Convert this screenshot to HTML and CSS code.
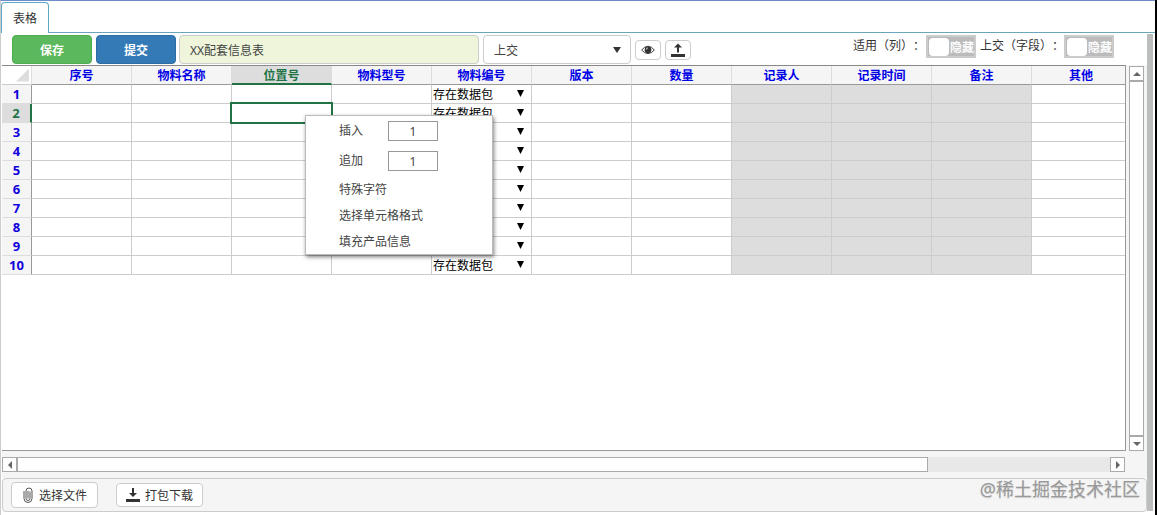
FILE: index.html
```
<!DOCTYPE html>
<html lang="zh-CN">
<head>
	<meta charset="utf-8">
	<title>表格</title>
	<link rel="stylesheet" href="styles.css">
</head>
<body>
	<div class="window">
		<div class="tabs">
			<div class="tab">表格</div>
			<div class="tabline"></div>
		</div>

		<div class="content">
			<div class="main">
				<div class="toolbar">
					<button class="btn save">保存</button>
					<button class="btn submit">提交</button>
					<input class="title" type="text" value="XX配套信息表">
					<div class="select"><span>上交</span><span class="arrow"></span></div>
					<button class="icon">
						<svg width="14" height="10" viewBox="0 0 14 10"><path d="M.6 5Q7-2.600 13.400 5Q7 12.200 .6 5Z" fill="#fff" stroke="#444" stroke-width="1"/><circle cx="7" cy="4.800" r="3.400" fill="#333"/><path d="M5.300 4.600Q5.400 3 7 2.900" fill="none" stroke="#ddd" stroke-width=".9"/></svg>
					</button>
					<button class="icon">
						<svg width="14" height="14" viewBox="0 0 14 14"><path d="M0 11h14v3H0zM6 9.500V4.500H3L7 .5l4 4H8v5z" fill="#333"/></svg>
					</button>
					<div class="switches">
						<span>适用（列）：</span>
						<div class="switch"><i></i><b>隐藏</b></div>
						<span>上交（字段）：</span>
						<div class="switch"><i></i><b>隐藏</b></div>
					</div>
				</div>

				<div class="sheetbox">
					<div class="sheet">
						<table>
							<thead>
								<tr>
									<th class="corner"><i></i></th>
									<th>序号</th>
									<th>物料名称</th>
									<th class="active">位置号</th>
									<th>物料型号</th>
									<th>物料编号</th>
									<th>版本</th>
									<th>数量</th>
									<th>记录人</th>
									<th>记录时间</th>
									<th>备注</th>
									<th class="last">其他</th>
								</tr>
							</thead>
							<tbody id="rows"></tbody>
						</table>

						<div class="menu">
							<div class="item num"><span>插入</span><input type="text" value="1"></div>
							<div class="item num"><span>追加</span><input type="text" value="1"></div>
							<div class="item">特殊字符</div>
							<div class="item">选择单元格格式</div>
							<div class="item">填充产品信息</div>
						</div>
					</div>
					<div class="vscroll">
						<div class="sbtn"><i class="up"></i></div>
						<div class="thumb"></div>
						<div class="sbtn"><i class="down"></i></div>
					</div>
				</div>

				<div class="hscroll">
					<div class="sbtn"><i class="left"></i></div>
					<div class="thumb"></div>
					<div class="track"></div>
					<div class="sbtn"><i class="right"></i></div>
				</div>

				<div class="footer">
					<button class="file">
						<svg width="10" height="16" viewBox="0 0 10 16"><path d="M1 4v7.500a4 4 0 0 0 8 0V4a3 3 0 0 0-6 0v7.500a2 2 0 0 0 4 0V4.500M5 4v7.500" fill="none" stroke="#555" stroke-width="1"/></svg>
						选择文件
					</button>
					<button class="file pack">
						<svg width="14" height="14" viewBox="0 0 14 14"><path d="M0 11h14v3H0zM6 0h2v5h3L7 9 3 5h3z" fill="#333"/></svg>
						打包下载
					</button>
					<span class="mark">@稀土掘金技术社区</span>
				</div>
			</div>
			<div class="pagescroll"></div>
		</div>
	</div>

	<script>
	var rows = document.getElementById("rows")
	for(var r = 1; r <= 10; r++){
		var tr = document.createElement('tr')
		var content = `<th class="${r == 2 ? 'active' : ''}">${r}</th>`
		for(var c = 1; c <= 11; c++){
			var cls = ""
			var text = ""
			if(c == 3 && r == 2) cls = "selected"
			if(c == 5){
				cls = "combo"
				text = `<div><span>存在数据包</span><i></i></div>`
			}
			if(c >= 8 && c <= 10) cls = "locked"
			content += `<td class="${cls}">${text}</td>`
		}
		tr.innerHTML = content
		rows.append(tr)
	}
	</script>
</body>
</html>
```
FILE: styles.css
```
*{box-sizing:border-box;}
body{margin:0; background:#000; font-family:"Noto Sans","Noto Sans CJK SC",sans-serif; font-size:12px; color:#333; overflow:hidden; text-spacing-trim:space-all;}
button,input{font:inherit; color:inherit; margin:0;}
svg{display:block; flex:none;}
i,b{font-style:normal;}

.window{width:1155px; height:515px; background:#fff; border-top:1px solid #6c8cc8; border-left:1px solid #ccc; display:flex; flex-direction:column;}

.tabs{display:flex; height:32px; padding-top:1px; flex:none;}
.tab{width:48px; height:31px; border:1px solid #5ba9c6; border-bottom:none; border-radius:4px 4px 0 0; text-align:center; line-height:32px;}
.tabline{flex:1; border-bottom:1px solid #6aa5bd;}

.content{display:flex; height:482px;}
.main{width:1146px; padding-left:1px; flex:none;}
.pagescroll{width:6px; height:477px; margin-top:1px; background:#bcbebd;}

.toolbar{display:flex; height:32px; padding:2px 0 0 10px;}
.btn{width:80px; height:29px; margin-right:4px; padding:1px 0 0; border-radius:4px; color:#fff; font-weight:bold; line-height:27px;}
.save{background:#5cb85c; border:1px solid #4cae4c;}
.submit{background:#337ab7; border:1px solid #2e6da4; margin-right:3px;}
.title{width:300px; height:29px; margin-right:4px; padding:1px 10px 0; background:#eef5da; border:1px solid #ccc; border-radius:4px; color:#444;}
.select{width:148px; height:29px; margin-right:4px; padding:0 9px 0 10px; border:1px solid #ccc; border-radius:4px; display:flex; align-items:center; justify-content:space-between; color:#444;}
.arrow{border:4px solid transparent; border-top:6px solid #333; border-bottom:none;}
.icon{width:26px; height:20px; margin:5px 4px 0 0; padding:0; background:#fff; border:1px solid #ccc; border-radius:4px; display:flex; align-items:center; justify-content:center;}
.switches{display:flex; margin-left:158px; white-space:nowrap; line-height:22px;}
.switches span{width:73px;}
.switches span + .switch + span{width:84px; margin-left:4px;}
.switch{width:50px; height:23px; padding:1px; border:1px solid #ccc; background:#bbb; display:flex; color:#fff; outline:1px solid #ccc; outline-offset:-2px;}
.switch i{width:20px; height:18px; margin:1px 1px 0 1px; background:#fff; border-radius:4px; flex:none;}
.switch b{line-height:22px; font-weight:normal; text-shadow:0 0 1px #fff;}

.sheetbox{display:flex; height:386px; background:#f5f5f5;}
.sheet{position:relative; width:1124px; background:#fff; border-top:1px solid #888; border-right:1px solid #999; border-bottom:1px solid #999;}
table{width:1123px; table-layout:fixed; border-collapse:separate; border-spacing:0;}
th,td{height:19px; padding:0; line-height:18px; border-right:1px solid #ccc; border-bottom:1px solid #ccc; width:100px;}
th{background:#f5f5f5; color:#1100dd; font-weight:bold;}
thead th{padding-top:2px; line-height:16px; border-bottom-color:#999; border-right-color:#ddd; color:#0000e6;}
thead .corner{width:30px; padding:0; background:#fff; border-bottom-color:#ccc;}
.corner i{display:block; width:13px; height:13px; margin:0 0 0 14px; background:#ddd; clip-path:polygon(100% 0,100% 100%,0 100%);}
thead .last,td:last-child{width:93px; border-right:none;}
thead .last{padding-left:5px;}
tbody th{border-right-color:#999; border-bottom-color:#ddd; font-size:13px;}
thead .active{background:#ddd; color:#217346; border-bottom:2px solid #217346; line-height:15px;}
tbody .active{background:#ddd; color:#217346; border-right:2px solid #217346;}
.locked{background:#ddd;}
.selected{position:relative;}
.selected:after{content:""; box-sizing:border-box; position:absolute; left:-2px; top:-2px; width:103px; height:22px; border:2px solid #217346;}
.combo div{display:flex; justify-content:space-between; height:18px; padding:0 7px 0 1px; line-height:20px; color:#000;}
.combo i{margin-top:5px; width:7px; height:7px; background:#000; clip-path:polygon(0 0,100% 0,50% 100%);}

.menu{position:absolute; left:303px; top:49px; width:188px; height:140px; background:#fff; border:1px solid #bbb; box-shadow:1px 2px 4px rgba(0,0,0,.5); color:#444;}
.item{height:26px; padding-left:33px; line-height:28px;}
.num{display:flex; height:30px; line-height:29px;}
.num span{width:49px;}
.num input{width:50px; height:20px; margin-top:5px; padding:0; border:1px solid #999; text-align:center;}

.vscroll{width:15px; margin:1px 0 0 3px; display:flex; flex-direction:column;}
.sbtn{width:15px; height:15px; background:#fff; border:1px solid #aaa; display:flex; align-items:center; justify-content:center; flex:none;}
.thumb{background:#fff; border:1px solid #aaa;}
.vscroll .thumb{flex:1;}
.sbtn i{border:4px solid transparent;}
.sbtn .up{border-top:none; border-bottom-color:#666;}
.sbtn .down{border-bottom:none; border-top-color:#666;}
.sbtn .left{border-left:none; border-right-color:#666;}
.sbtn .right{border-right:none; border-left-color:#666;}
.hscroll{display:flex; height:27px; padding:6px 22px 6px 0; background:#f5f5f5;}
.hscroll .thumb{width:911px; height:15px;}
.hscroll .track{flex:1; background:#e8e8e8;}

.footer{display:flex; height:34px; padding:3px 6px 0 8px; background:#f5f5f5; border:1px solid #ccc; border-radius:4px;}
.file{width:87px; height:26px; padding:0 0 0 11px; background:#fff; border:1px solid #ccc; border-radius:4px; display:flex; align-items:center; gap:6px; white-space:nowrap;}
.pack{height:24px; margin:1px 0 0 18px; padding-left:9px; gap:5px;}
.mark{margin-left:auto; margin-top:-6px; font-size:18px; line-height:26px; color:#999; text-shadow:0 1px 1px #ccc;}
```
